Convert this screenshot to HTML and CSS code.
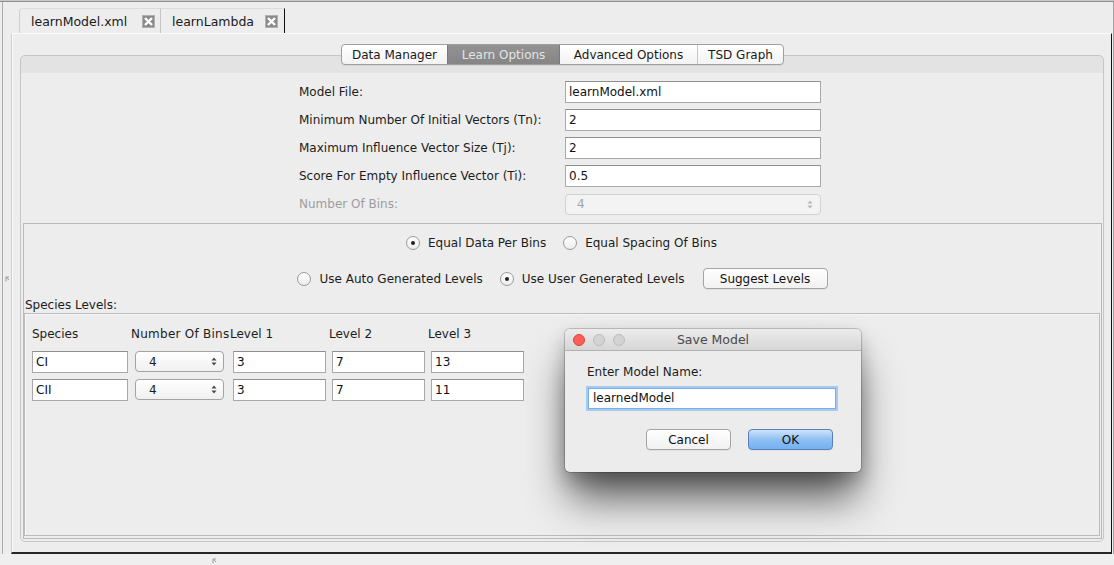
FILE: index.html
```html
<!DOCTYPE html>
<html>
<head>
<meta charset="utf-8">
<link rel="stylesheet" href="styles.css">
</head>
<body>
<div class="app">
  <div class="topline"></div>
  <div class="main">
    <div class="gutter">
      <div class="gline"></div>
      <div class="gmark">
        <svg width="5" height="6" viewBox="0 0 5 6"><path d="M1 5.5 L1 1 L4 1 M1 1 L4 4" fill="none" stroke="#9a9a9a" stroke-width="1"/></svg>
      </div>
    </div>
    <div class="tabpane">
      <div class="tabs">
        <div class="tab tab-first">
          <span class="tab-label">learnModel.xml</span>
          <svg class="close" width="13" height="13" viewBox="0 0 13 13"><rect x="0.5" y="0.5" width="12" height="12" fill="#8a8a8a" stroke="#b0b0b0"/><path d="M3 3 L10 10 M10 3 L3 10" stroke="#fff" stroke-width="2.4"/></svg>
        </div>
        <div class="tab tab-active">
          <span class="tab-label">learnLambda</span>
          <svg class="close" width="13" height="13" viewBox="0 0 13 13"><rect x="0.5" y="0.5" width="12" height="12" fill="#8a8a8a" stroke="#b0b0b0"/><path d="M3 3 L10 10 M10 3 L3 10" stroke="#fff" stroke-width="2.4"/></svg>
        </div>
      </div>
      <div class="content">
        <div class="panel">
          <div class="seg">
            <div class="seg-item seg-dm">Data Manager</div>
            <div class="seg-item seg-lo selected">Learn Options</div>
            <div class="seg-item seg-ao">Advanced Options</div>
            <div class="seg-item seg-tsd">TSD Graph</div>
          </div>
          <div class="form">
            <label class="flabel">Model File:</label>
            <div class="field">learnModel.xml</div>
            <label class="flabel">Minimum Number Of Initial Vectors (Tn):</label>
            <div class="field">2</div>
            <label class="flabel">Maximum Influence Vector Size (Tj):</label>
            <div class="field">2</div>
            <label class="flabel">Score For Empty Influence Vector (Ti):</label>
            <div class="field">0.5</div>
            <label class="flabel disabled">Number Of Bins:</label>
            <div class="select select-disabled"><span>4</span>
              <svg width="6" height="9" viewBox="0 0 6 9"><path d="M0.5 3.5 L3 0.5 L5.5 3.5 Z M0.5 5.5 L3 8.5 L5.5 5.5 Z" fill="#b8b8b8"/></svg>
            </div>
          </div>
          <div class="lower">
            <div class="rrow rrow-1">
              <span class="radio checked"></span><span class="rlabel">Equal Data Per Bins</span>
              <span class="radio"></span><span class="rlabel last">Equal Spacing Of Bins</span>
            </div>
            <div class="rrow rrow-2">
              <span class="radio"></span><span class="rlabel">Use Auto Generated Levels</span>
              <span class="radio checked"></span><span class="rlabel">Use User Generated Levels</span>
              <div class="btn btn-suggest">Suggest Levels</div>
            </div>
            <div class="species-title">Species Levels:</div>
            <div class="species-box">
              <div class="sgrid">
                <div class="sh">Species</div>
                <div class="sh sh-bins">Number Of Bins</div>
                <div class="sh">Level 1</div>
                <div class="sh">Level 2</div>
                <div class="sh">Level 3</div>

                <div class="cell"><div class="field sfield sp">CI</div></div>
                <div class="cell"><div class="select tsel"><span>4</span><svg width="6" height="9" viewBox="0 0 6 9"><path d="M0.5 3.5 L3 0.5 L5.5 3.5 Z M0.5 5.5 L3 8.5 L5.5 5.5 Z" fill="#4a4a4a"/></svg></div></div>
                <div class="cell"><div class="field sfield lv">3</div></div>
                <div class="cell"><div class="field sfield lv">7</div></div>
                <div class="cell"><div class="field sfield lv">13</div></div>

                <div class="cell"><div class="field sfield sp">CII</div></div>
                <div class="cell"><div class="select tsel"><span>4</span><svg width="6" height="9" viewBox="0 0 6 9"><path d="M0.5 3.5 L3 0.5 L5.5 3.5 Z M0.5 5.5 L3 8.5 L5.5 5.5 Z" fill="#4a4a4a"/></svg></div></div>
                <div class="cell"><div class="field sfield lv">3</div></div>
                <div class="cell"><div class="field sfield lv">7</div></div>
                <div class="cell"><div class="field sfield lv">11</div></div>
              </div>
            </div>
          </div>
        </div>
      </div>
    </div>
    <div class="rightstrip"></div>
  </div>
  <div class="status">
    <svg width="5" height="6" viewBox="0 0 5 6"><path d="M1 5.5 L1 1 L4 1 M1 1 L4 4" fill="none" stroke="#9a9a9a" stroke-width="1"/></svg>
  </div>

  <div class="dialog">
    <div class="titlebar">
      <div class="lights">
        <span class="light red"></span><span class="light"></span><span class="light"></span>
      </div>
      <div class="dtitle">Save Model</div>
    </div>
    <div class="dbody">
      <div class="dlabel">Enter Model Name:</div>
      <div class="dinput">learnedModel</div>
      <div class="dbuttons">
        <div class="btn dbtn">Cancel</div>
        <div class="btn dbtn ok">OK</div>
      </div>
    </div>
  </div>
</div>
</body>
</html>
```

FILE: styles.css
```css
html, body {
  margin: 0;
  padding: 0;
}
body {
  background: #ececec;
  font-family: "DejaVu Sans", "Liberation Sans", sans-serif;
  font-size: 12px;
  color: #1c1c1c;
}
.app {
  position: relative;
  width: 1114px;
  height: 565px;
  overflow: hidden;
  display: flex;
  flex-direction: column;
  background: #ededed;
}
.topline {
  height: 2px;
  background: linear-gradient(#c9c9c9 0 1px, #8f8f8f 1px);
  flex: none;
}
.main {
  display: flex;
  height: 552px;
  flex: none;
}
.gutter {
  width: 11px;
  display: flex;
  flex: none;
}
.gline {
  margin-left: 2px;
  width: 1px;
  background: #acacac;
}
.gmark {
  flex: 1;
  display: flex;
  align-items: center;
  justify-content: center;
  padding-top: 2px;
}
.gmark svg { display: block; }

.tabpane {
  width: 1101px;
  display: flex;
  flex-direction: column;
  flex: none;
}
.tabs {
  height: 31px;
  display: flex;
  align-items: flex-end;
  padding-left: 8px;
  flex: none;
}
.tab {
  height: 25px;
  box-sizing: border-box;
  display: flex;
  align-items: center;
  background: #ededed;
  border-top: 1px solid #dcdcdc;
  font-size: 12.5px;
  color: #1a1a1a;
}
.tab-label { flex: 1; padding-top: 1px; }
.tab .close { display: block; flex: none; }
.tab-first {
  width: 141px;
  padding-left: 11px;
  padding-right: 5px;
  border-left: 1px solid #cfcfcf;
  border-radius: 4px 0 0 0;
}
.tab-active {
  width: 125px;
  padding-left: 11px;
  padding-right: 6px;
  border-left: 1px solid #c4c4c4;
  border-right: 1px solid #111;
}
.content {
  flex: 1;
  border-left: 1px solid #cfcfcf;
  border-top: 1px solid #fbfbfb;
  border-right: 1px solid #111;
  border-bottom: 2px solid #262626;
  box-shadow: inset 1px 0 0 #fafafa;
  display: flex;
  flex-direction: column;
  background: #ededed;
}
.panel {
  flex: 1;
  margin: 21px 7px 10px 8px;
  border: 1px solid #c6c6c6;
  border-radius: 5px;
  background: linear-gradient(#e3e3e3 0 17px, #ededed 17px);
  display: flex;
  flex-direction: column;
}

/* segmented control */
.seg {
  align-self: center;
  margin-top: -12px;
  margin-left: 1px;
  height: 21px;
  display: flex;
  border: 1px solid #9f9f9f;
  border-radius: 4px;
  box-sizing: border-box;
  background: linear-gradient(#ffffff, #f3f3f3);
  box-shadow: 0 1px 0 rgba(0,0,0,0.06);
}
.seg-item {
  display: flex;
  align-items: center;
  justify-content: center;
  font-size: 12px;
  color: #1a1a1a;
  border-left: 1px solid #c8c8c8;
}
.seg-item:first-child { border-left: 0; }
.seg-dm { width: 105px; }
.seg-lo { width: 111px; }
.seg-ao { width: 137px; }
.seg-tsd { width: 85px; }
.seg-item.selected {
  background: linear-gradient(#939393, #858585);
  color: #e4e4e4;
  border-left-color: #7a7a7a;
}
.seg-item.selected + .seg-item { border-left-color: #7a7a7a; }

/* form */
.form {
  margin-top: 16px;
  margin-left: 278px;
  display: grid;
  grid-template-columns: 266px 256px;
  grid-auto-rows: 22px;
  row-gap: 6px;
  align-items: center;
}
.flabel { color: #1c1c1c; }
.flabel.disabled { color: #9d9d9d; }
.field {
  height: 22px;
  box-sizing: border-box;
  background: #fff;
  border: 1px solid #a9a9a9;
  border-top-color: #8f8f8f;
  padding: 0 4px 0 3px;
  line-height: 20px;
  color: #111;
}
.select {
  height: 21px;
  box-sizing: border-box;
  border-radius: 4px;
  display: flex;
  align-items: center;
  justify-content: space-between;
}
.select svg { display: block; }
.select-disabled {
  border: 1px solid #d2d2d2;
  background: #f3f3f3;
  color: #a5a5a5;
  padding: 0 7px 0 11px;
}

/* lower section */
.lower {
  flex: 1;
  margin: 8px 1px 2px 2px;
  border: 1px solid #b9b9b9;
  display: flex;
  flex-direction: column;
}
.rrow {
  display: flex;
  align-items: center;
  justify-content: center;
}
.rrow-1 { margin-top: 10px; height: 18px; padding-right: 2px; }
.rrow-2 { margin-top: 16px; height: 21px; }
.radio {
  width: 14px;
  height: 14px;
  box-sizing: border-box;
  border-radius: 50%;
  border: 1px solid #9a9a9a;
  background: linear-gradient(#ffffff, #ececec);
  display: flex;
  align-items: center;
  justify-content: center;
  flex: none;
}
.radio.checked::after {
  content: "";
  width: 4px;
  height: 4px;
  border-radius: 50%;
  background: #222;
}
.rlabel { margin-left: 8px; margin-right: 17px; }
.rlabel.last { margin-right: 0; }
.btn {
  height: 21px;
  box-sizing: border-box;
  border: 1px solid #a4a4a4;
  border-radius: 4px;
  background: linear-gradient(#ffffff, #f1f1f1);
  display: flex;
  align-items: center;
  justify-content: center;
  color: #111;
  box-shadow: 0 1px 0 rgba(0,0,0,0.05);
}
.btn-suggest { width: 125px; margin-left: 1px; }

.species-title {
  margin-top: 9px;
  margin-left: 1px;
  height: 14px;
  line-height: 14px;
}
.species-box {
  flex: 1;
  margin: 1px 1px 2px 0;
  border: 1px solid #bcbcbc;
  box-shadow: inset 1px 1px 0 #f8f8f8;
}
.sgrid {
  display: grid;
  grid-template-columns: repeat(5, 99px);
  grid-template-rows: 18px 22px 22px;
  row-gap: 6px;
  margin-top: 13px;
  margin-left: 7px;
}
.sgrid .sh { line-height: 15px; align-self: start; }
.sgrid .sh-bins { letter-spacing: 0.25px; }
.cell { display: flex; }
.sfield.sp { width: 96px; }
.sfield.lv { width: 93px; margin-left: 3px; }
.tsel {
  width: 89px;
  margin-left: 4px;
  height: 21px;
  border: 1px solid #a3a3a3;
  background: linear-gradient(#ffffff, #f0f0f0);
  padding: 0 6px 0 13px;
  color: #1a1a1a;
}

.rightstrip {
  width: 2px;
  flex: none;
  border-right: 1px solid #a2a2a2;
  box-sizing: border-box;
  background: #ededed;
}

.status {
  flex: 1;
  display: flex;
  align-items: center;
  padding-left: 212px;
  background: #efefef;
}
.status svg { display: block; margin-top: 2px; }

/* dialog — floats over the page */
.dialog {
  position: absolute;
  left: 565px;
  top: 329px;
  width: 296px;
  height: 143px;
  box-sizing: border-box;
  background: #ececec;
  border-radius: 5px;
  box-shadow: 0 0 0 1px rgba(0,0,0,0.18), 0 30px 42px -4px rgba(0,0,0,0.62), 0 8px 18px rgba(0,0,0,0.22);
  display: flex;
  flex-direction: column;
}
.titlebar {
  height: 22px;
  box-sizing: border-box;
  border-bottom: 1px solid #b2b2b2;
  border-radius: 5px 5px 0 0;
  background: linear-gradient(#ececec, #d6d6d6);
  display: flex;
  align-items: center;
  position: relative;
}
.lights {
  display: flex;
  gap: 8px;
  padding-left: 8px;
}
.light {
  width: 12px;
  height: 12px;
  box-sizing: border-box;
  border-radius: 50%;
  background: #d3d3d3;
  border: 1px solid #bdbdbd;
}
.light.red {
  background: #fc5f57;
  border-color: #e0443e;
}
.dtitle {
  position: absolute;
  left: 0;
  right: 0;
  text-align: center;
  color: #4a4a4a;
  font-size: 12.5px;
}
.dbody {
  padding: 14px 0 0 23px;
  display: flex;
  flex-direction: column;
}
.dlabel { line-height: 15px; height: 15px; margin-left: -1px; }
.dinput {
  margin-top: 8px;
  width: 248px;
  height: 21px;
  box-sizing: border-box;
  background: #fff;
  border: 1px solid #7aaee8;
  box-shadow: 0 0 0 2px #a6cbf3;
  padding: 0 4px;
  line-height: 19px;
  color: #111;
}
.dbuttons {
  display: flex;
  gap: 17px;
  margin-top: 20px;
  margin-left: 58px;
}
.dbtn { width: 85px; height: 21px; }
.dbtn.ok {
  background: linear-gradient(#cfe3fa, #8ec0f4 50%, #74b0f0);
  border-color: #5d7fb9;
}
```
